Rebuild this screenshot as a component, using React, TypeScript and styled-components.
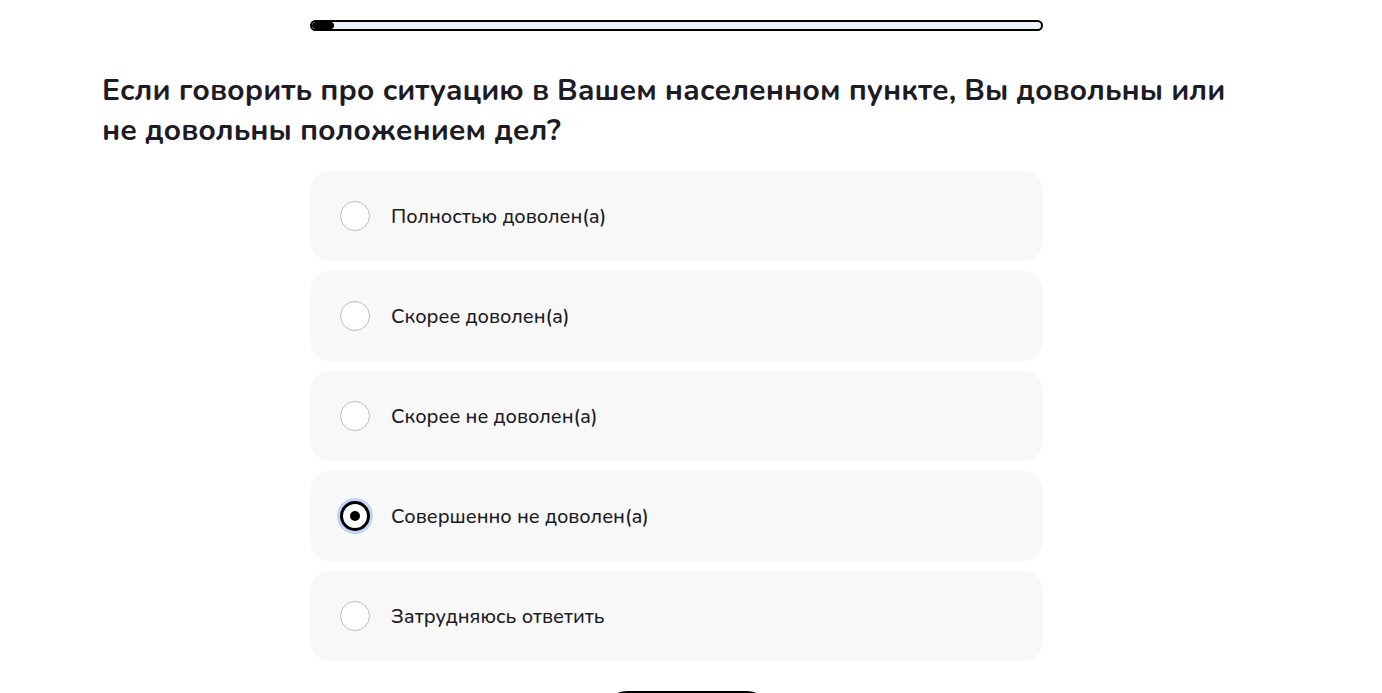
import React, { useState } from "react";
import styled, { createGlobalStyle } from "styled-components";

const Global = createGlobalStyle`
  html, body { margin: 0; padding: 0; background: #fff; }
  body { font-family: "Nunito", "Lato", "Noto Sans", sans-serif; color: #1d1b26; }
  * { box-sizing: border-box; }
`;

const Page = styled.div`
  padding: 0 0 0 102px;
  width: 1251px;
`;

const ProgressWrap = styled.div`
  width: 733px;
  margin: 20px auto 0;
  height: 11px;
  border: 2px solid #000;
  border-radius: 6px;
  background: #edf2f7;
  overflow: hidden;
  display: flex;
`;

const ProgressFill = styled.div`
  background: #000;
  border-radius: 6px;
  height: 100%;
`;

const Title = styled.h1`
  margin: 40px 0 0;
  font-size: 30px;
  line-height: 40px;
  font-weight: 700;
  color: #1d1b26;
  max-width: 1140px;
`;

const Options = styled.div`
  width: 733px;
  margin: 20px auto 0;
  display: flex;
  flex-direction: column;
  gap: 10px;
`;

const Option = styled.label`
  height: 90px;
  background: #f8f8f8;
  border-radius: 20px;
  display: flex;
  align-items: center;
  padding-left: 30px;
  gap: 21px;
  cursor: pointer;
  font-size: 20px;
  font-weight: 500;
  color: #1d1b26;
`;

const Radio = styled.span<{ $checked: boolean }>`
  width: 30px;
  height: 30px;
  border-radius: 50%;
  flex: none;
  background: #fff;
  border: ${(p) => (p.$checked ? "3px solid #000" : "1px solid #bdbdbd")};
  box-shadow: ${(p) => (p.$checked ? "0 0 0 3px #c2d3f5" : "none")};
  display: flex;
  align-items: center;
  justify-content: center;
  &::after {
    content: "";
    display: ${(p) => (p.$checked ? "block" : "none")};
    width: 10px;
    height: 10px;
    border-radius: 50%;
    background: #000;
  }
`;

const Footer = styled.div`
  width: 733px;
  margin: 30px auto 0;
  padding-left: 20px;
  display: flex;
  justify-content: center;
`;

const NextButton = styled.button`
  width: 170px;
  height: 50px;
  border: none;
  border-radius: 25px;
  background: #000;
  color: #fff;
  font-family: inherit;
  font-size: 18px;
`;

const options = [
  "Полностью доволен(а)",
  "Скорее доволен(а)",
  "Скорее не доволен(а)",
  "Совершенно не доволен(а)",
  "Затрудняюсь ответить",
];

export default function App() {
  const [selected, setSelected] = useState(3);
  return (
    <Page>
      <Global />
      <ProgressWrap>
        <ProgressFill style={{ width: "3%" }} />
      </ProgressWrap>
      <Title>
        Если говорить про ситуацию в Вашем населенном пункте, Вы довольны или не довольны положением дел?
      </Title>
      <Options>
        {options.map((o, i) => (
          <Option key={o} onClick={() => setSelected(i)}>
            <Radio $checked={selected === i} />
            {o}
          </Option>
        ))}
      </Options>
      <Footer>
        <NextButton>Далее</NextButton>
      </Footer>
    </Page>
  );
}
